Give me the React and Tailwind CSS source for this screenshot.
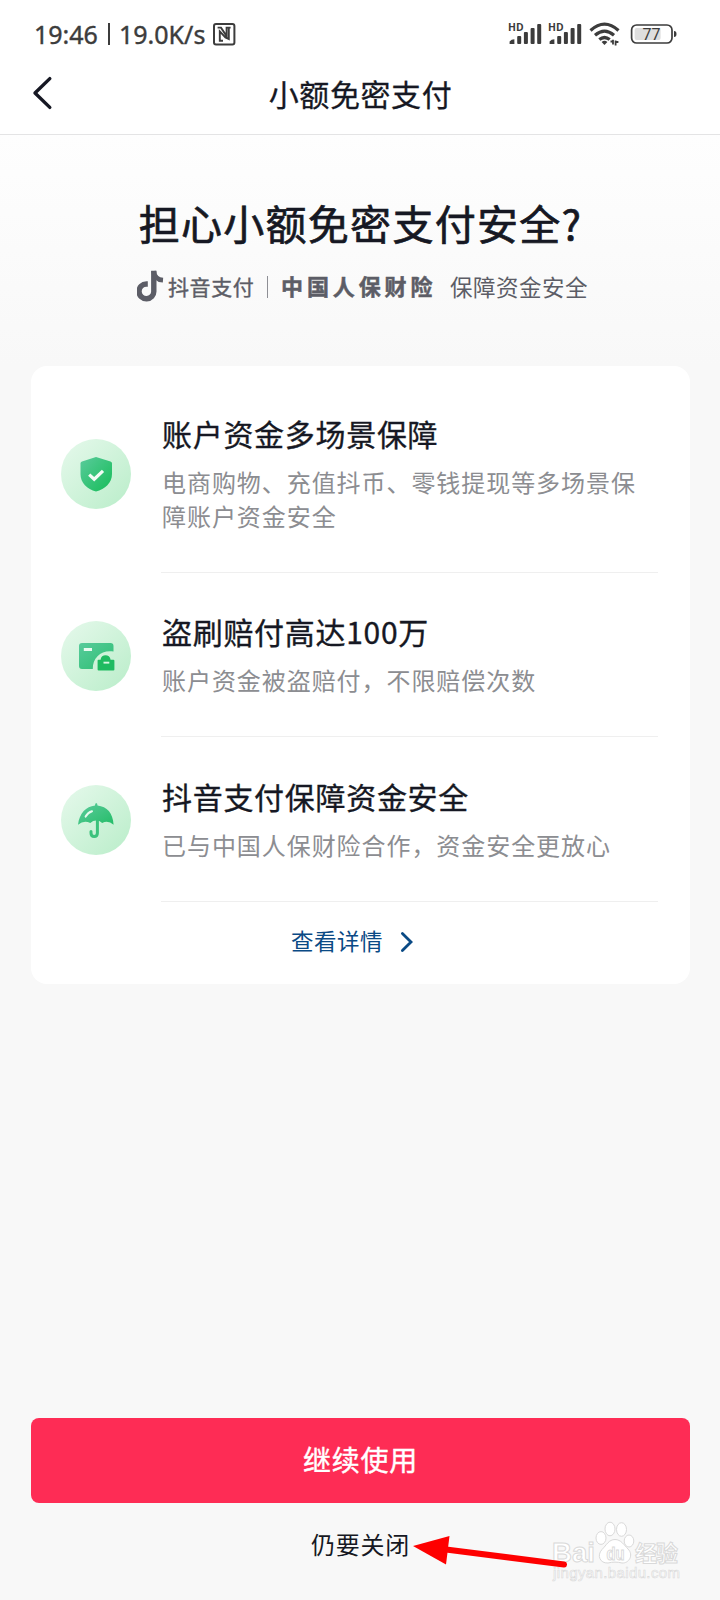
const ShieldIcon = () => (
  <svg viewBox="0 0 70 70" className="h-[70px] w-[70px]">
    <defs>
      <linearGradient id="shield" x1="0" y1="0" x2="1" y2="1">
        <stop offset="0" stopColor="#5acb9c" />
        <stop offset="1" stopColor="#16bd58" />
      </linearGradient>
    </defs>
    <path
      d="M35 18 L49.5 22.6 Q51 23.2 51 24.6 V35 C51 44 44 50 35 52.5 C26 50 19.5 44 19.5 35 V24.6 Q19.5 23.2 21 22.6 Z"
      fill="url(#shield)"
    />
    <path
      d="M28.2 35.6 L33.2 40.2 L42 31.8"
      fill="none"
      stroke="#f2fcf5"
      strokeWidth="3.2"
    />
  </svg>
);

const CardIcon = () => (
  <svg viewBox="0 0 70 70" className="h-[70px] w-[70px]">
    <defs>
      <linearGradient id="wallet" x1="0" y1="0" x2="1" y2="1">
        <stop offset="0" stopColor="#58cb9b" />
        <stop offset="1" stopColor="#2dbf72" />
      </linearGradient>
    </defs>
    <path
      d="M21 22 H49.5 Q52.5 22 52.5 25 V30.5 C41 28.5 31.5 36 31.8 48 H21 Q18 48 18 45 V25 Q18 22 21 22 Z"
      fill="url(#wallet)"
    />
    <path d="M22.8 27 H31 V30 H22.8 Z" fill="#e9faef" />
    <path
      d="M36.6 39.5 Q36.6 38.7 37.4 38.7 H39.6 C40 32.8 49 32.8 49.6 38.7 H52.4 Q53.4 38.7 53.4 39.7 V48.6 Q53.4 49.6 52.4 49.6 H37.6 Q36.6 49.6 36.6 48.6 Z"
      fill="#1fbb61"
    />
    <path d="M42.5 40.7 H48.3 V42.6 H42.5 Z" fill="#d8f6e2" />
  </svg>
);

const UmbrellaIcon = () => (
  <svg viewBox="0 0 70 70" className="h-[70px] w-[70px]">
    <defs>
      <linearGradient id="umbrella" x1="0" y1="0" x2="1" y2="1">
        <stop offset="0" stopColor="#5ccb9d" />
        <stop offset="1" stopColor="#25bd68" />
      </linearGradient>
    </defs>
    <path
      d="M36.4 34 V48 C36.4 52.6 30 52.6 30 48 V46.6"
      fill="none"
      stroke="#3cc27c"
      strokeWidth="3"
      strokeLinecap="round"
    />
    <path
      d="M34 20.5 Q34 18 35.2 18 Q36.5 18 36.5 20.5 C46 21.5 52 28 52.6 39.8 Q47 34.6 41.2 38 Q38.4 35.6 35.2 35.6 Q32 35.6 29.3 38 Q23 34.6 17 39.8 C18.5 28 25 21.5 34 20.5 Z"
      fill="url(#umbrella)"
    />
    <path
      d="M24.6 31.6 Q27 27.4 31 26.2"
      fill="none"
      stroke="#e6faee"
      strokeWidth="2"
      strokeLinecap="round"
    />
  </svg>
);

const Signal = () => (
  <svg viewBox="0 -6 34 36" className="h-9 w-[34px]" fill="#3c3c3c">
    <text
      x="0"
      y="8.6"
      fontSize="11"
      fontWeight="700"
      fontFamily="Open Sans, sans-serif"
      textLength="15.6"
      lengthAdjust="spacingAndGlyphs"
    >
      HD
    </text>
    <path d="M1.6 22 V19.4 Q3.4 17.2 6.4 17.2 V22 Z" />
    <rect x="9.2" y="14" width="4" height="8" rx="1" />
    <rect x="15.9" y="10" width="4" height="12" rx="1" />
    <rect x="22.6" y="6" width="4" height="16" rx="1" />
    <rect x="29.2" y="2" width="4" height="20" rx="1" />
  </svg>
);

const StatusBar = () => (
  <div className="flex h-[68px] items-center pl-[34px] text-[#3c3c3c]">
    <div className="flex w-[178px] items-center font-['Noto_Sans',sans-serif] text-[25px] leading-[68px] whitespace-nowrap [-webkit-text-stroke:0.4px_#3c3c3c]">
      <span className="w-[74px]">19:46</span>
      <span className="h-[22px] w-[2px] bg-[#3c3c3c]" />
      <span className="ml-[9px]">19.0K/s</span>
    </div>
    <svg viewBox="0 0 24 24" className="h-6 w-6" fill="none" stroke="#3c3c3c" strokeWidth="2">
      <rect x="2" y="2" width="20.4" height="20.4" rx="2" strokeWidth="2" />
      <path
        d="M5.6 5.6 H9 L14.6 14 V5.6 H18.6 M16.8 5.6 V17 L13.4 15.4 L7.8 9.4 V18.8 H11"
        strokeWidth="1.9"
      />
    </svg>
    <div className="ml-[272px] flex items-center">
      <Signal />
      <div className="ml-[6px]">
        <Signal />
      </div>
      <svg viewBox="0 0 32 26" className="ml-[7px] h-[26px] w-8" fill="none" stroke="#3c3c3c" strokeWidth="3.2">
        <path d="M1.5 9.5 Q15.5 -3.2 29.5 9.5" />
        <path d="M6 14.2 Q15.5 6 25 14.2" />
        <path d="M10.3 18.6 Q15.5 14.4 20.7 18.6" />
        <path d="M12.6 21 Q15.5 18.6 18.4 21 L15.5 24 Z" fill="#3c3c3c" stroke="none" />
        <path d="M21.5 20.5 H24 M24 18.8 V23.5 M26.6 24.5 V19.5 M26.4 21 H29.4" strokeWidth="1.8" />
      </svg>
      <svg viewBox="0 0 48 22" className="ml-[9px] h-[22px] w-12">
        <rect x="1.6" y="2" width="40.4" height="18" rx="5" fill="#fff" stroke="#3c3c3c" strokeWidth="1.7" />
        <rect x="4.6" y="5" width="26" height="12" rx="2" fill="#dedede" />
        <path d="M44 8 Q46.5 8 46.5 11 Q46.5 14 44 14 Z" fill="#3c3c3c" />
        <text x="21.5" y="16.6" textAnchor="middle" fontSize="16" fontFamily="Roboto, sans-serif" fill="#3c3c3c">
          77
        </text>
      </svg>
    </div>
  </div>
);

const NoteLogo = () => (
  <svg viewBox="0 0 27 32" className="mb-[2px] h-8 w-[27px]" fill="none" stroke="#5c5d66" strokeWidth="5.4">
    <path d="M16.8 0.8 V21 A7.4 7.4 0 1 1 9.4 14 H10.8" />
    <path d="M16.6 1 C17.2 6.6 20.4 9.8 26 10.2" strokeWidth="4.8" />
  </svg>
);

const Watermark = () => (
  <svg viewBox="0 0 136 66" className="absolute top-[1517px] left-[548px] h-[66px] w-[136px]">
    <g fill="#fff" stroke="#d9d9d9" strokeWidth="1">
      <text x="4" y="44.5" fontSize="28" fontWeight="700" textLength="43" lengthAdjust="spacingAndGlyphs" fontFamily="Liberation Sans, sans-serif">
        Bai
      </text>
      <ellipse cx="53" cy="21" rx="5" ry="6.4" />
      <ellipse cx="62" cy="12" rx="5" ry="6.8" />
      <ellipse cx="73.5" cy="12.5" rx="5" ry="6.8" />
      <ellipse cx="81" cy="24" rx="4.8" ry="6" />
      <path d="M67 22.5 C73 22.5 76 28 80 32 C86 38 81 46.5 74 46 C69 44.8 65 44.8 60 46 C52 46.5 48.5 38.5 54 32.5 C58.5 28 61 22.5 67 22.5 Z" />
      <text x="58.5" y="42.5" fontSize="18" fontWeight="700" textLength="18" lengthAdjust="spacingAndGlyphs" fontFamily="Liberation Sans, sans-serif">
        du
      </text>
      <text x="87" y="43.5" fontSize="22" fontWeight="700" textLength="43" fontFamily="Noto Sans CJK SC, sans-serif">
        经验
      </text>
      <text x="5" y="61" fontSize="15" strokeWidth="0.6" textLength="127" fontFamily="Liberation Sans, sans-serif">
        jingyan.baidu.com
      </text>
    </g>
  </svg>
);

const Arrow = () => (
  <svg viewBox="0 0 160 36" className="absolute top-[1532px] left-[410px] h-9 w-40">
    <path d="M36 17.5 L154 32.5" stroke="#fe0000" strokeWidth="6" strokeLinecap="round" />
    <path d="M3 14 L39.5 4 L36 32.5 Z" fill="#fe0000" />
  </svg>
);

const features = [
  {
    icon: <ShieldIcon />,
    title: "账户资金多场景保障",
    desc: ["电商购物、充值抖币、零钱提现等多场景保", "障账户资金安全"],
    height: "h-[207px]",
    iconTop: "pt-[73px]",
    textTop: "pt-[46px]",
  },
  {
    icon: <CardIcon />,
    title: "盗刷赔付高达100万",
    desc: ["账户资金被盗赔付，不限赔偿次数"],
    height: "h-[164px]",
    iconTop: "pt-[48px]",
    textTop: "pt-[37px]",
  },
  {
    icon: <UmbrellaIcon />,
    title: "抖音支付保障资金安全",
    desc: ["已与中国人保财险合作，资金安全更放心"],
    height: "h-[165px]",
    iconTop: "pt-[48px]",
    textTop: "pt-[38px]",
  },
];

const Feature = ({ icon, title, desc, height, iconTop, textTop }) => (
  <div className={`flex pl-[30px] ${height}`}>
    <div className={`w-[100px] ${iconTop}`}>
      <div className="h-[70px] w-[70px] rounded-full bg-gradient-to-br from-[#e6f9ec] to-[#b9edc9]">
        {icon}
      </div>
    </div>
    <div className={`w-[497px] border-b border-[#efefef] whitespace-nowrap ${textTop}`}>
      <h3 className="pl-px text-[30px] leading-[42px] tracking-[0.7px] text-[#161823] [-webkit-text-stroke:0.35px_#161823]">
        {title}
      </h3>
      <div className="mt-[11px] pl-px text-[24px] leading-[34px] tracking-[0.94px] text-[#8c8d91]">
        {desc.map((line) => (
          <p key={line}>{line}</p>
        ))}
      </div>
    </div>
  </div>
);

const App = () => {
  return (
    <div className="relative flex h-[1600px] w-[720px] flex-col overflow-hidden bg-[#f8f8f8] font-['Noto_Sans_CJK_SC',sans-serif] text-[#161823]">
      {/* Top bar */}
      <div className="h-[135px] shrink-0 border-b border-[#e4e4e5] bg-white">
        <StatusBar />
        <div className="flex h-[50px] items-center">
          <svg viewBox="0 0 22 36" className="ml-[31px] h-9 w-[22px]" fill="none" stroke="#161823" strokeWidth="3.4" strokeLinecap="round" strokeLinejoin="round">
            <path d="M18.8 3.6 L4 18 L18.8 32.4" />
          </svg>
          <h1 className="w-[615px] text-center text-[30px] leading-[50px] tracking-[0.6px] [-webkit-text-stroke:0.3px_#161823]">
            小额免密支付
          </h1>
        </div>
      </div>

      {/* Heading */}
      <div className="h-[231px] shrink-0 bg-gradient-to-b from-[#fefefe] to-[#f8f8f8] pt-[57px]">
        <h2 className="pl-px text-center text-[41px] leading-[60px] tracking-[1.3px] [-webkit-text-stroke:0.7px_#161823]">
          担心小额免密支付安全?
        </h2>
        <div className="mt-[17px] flex h-9 items-center pl-[137px] whitespace-nowrap text-[#5c5d66]">
          <NoteLogo />
          <span className="ml-[4px] w-[86px] text-[21px] tracking-[0.6px] [-webkit-text-stroke:0.4px_#5c5d66]">
            抖音支付
          </span>
          <span className="ml-[13px] h-[22px] w-px bg-[#8e8f95]" />
          <span className="mb-[3px] ml-[13px] w-[156px] text-[22px] font-bold tracking-[3.9px] [-webkit-text-stroke:0.5px_#5c5d66]">
            中国人保财险
          </span>
          <span className="ml-[13px] text-[22.5px] tracking-[0.5px]">
            保障资金安全
          </span>
        </div>
      </div>

      {/* Guarantee card */}
      <div className="ml-[31px] h-[618px] w-[659px] shrink-0 rounded-2xl bg-white">
        {features.map((item) => (
          <Feature key={item.title} {...item} />
        ))}
        <div className="flex h-[80px] items-center pl-[260px] text-[#0a4a85]">
          <span className="mb-[2px] text-[22.5px] tracking-[0.5px]">查看详情</span>
          <svg viewBox="0 0 14 22" className="ml-[17px] h-[22px] w-[14px]" fill="none" stroke="#0a4a85" strokeWidth="2.8" strokeLinecap="round">
            <path d="M2.4 2.6 L11 11 L2.4 19.4" />
          </svg>
        </div>
      </div>

      {/* Actions */}
      <div className="mt-auto ml-[31px] flex h-[182px] w-[659px] shrink-0 flex-col items-center">
        <button className="h-[85px] w-full rounded-lg bg-[#fe2c55] pb-[4px] text-[28px] tracking-[0.7px] text-white [-webkit-text-stroke:0.4px_#fff]">
          继续使用
        </button>
        <button className="mt-[18px] h-[46px] text-[24px] tracking-[0.7px]">
          仍要关闭
        </button>
      </div>

      <Watermark />
      <Arrow />
    </div>
  );
};

export default App;
